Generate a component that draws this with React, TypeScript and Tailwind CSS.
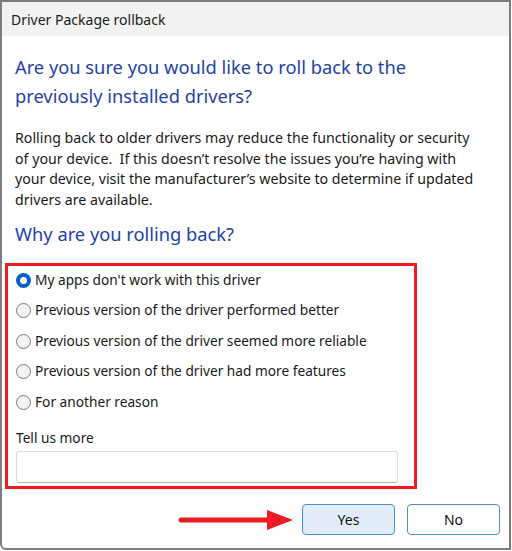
import React from 'react';

const reasons = [
  "My apps don't work with this driver",
  'Previous version of the driver performed better',
  'Previous version of the driver seemed more reliable',
  'Previous version of the driver had more features',
  'For another reason',
];

function Radio({ checked }: { checked?: boolean }) {
  if (checked) {
    return (
      <span className="w-[15px] h-[15px] rounded-full bg-[#0a5fc4] flex items-center justify-center shrink-0">
        <span className="w-[7px] h-[7px] rounded-full bg-white" />
      </span>
    );
  }
  return <span className="w-[15px] h-[15px] rounded-full border border-[#7a7a7a] bg-[#f3f3f3] shrink-0" />;
}

export default function App() {
  return (
    <div
      className="w-[512px] h-[551px] bg-white overflow-hidden"
      style={{ fontFamily: '"Noto Sans", "Open Sans", sans-serif' }}
    >
      <div className="w-[511px] h-[550px] border-2 border-[#7d7d7d] rounded-bl-[6px] flex flex-col">
        {/* Title bar */}
        <div className="h-[34px] bg-[#f2f2f2] flex items-center pl-[9px] text-[14px] text-[#1a1a1a]">
          Driver Package rollback
        </div>

        <div className="flex flex-col pl-[13px] pr-[10px]">
          {/* Main instruction */}
          <h1 className="mt-[16px] text-[18.3px] leading-[29px] text-[#1f43a6] whitespace-nowrap">
            Are you sure you would like to roll back to the
            <br />
            previously installed drivers?
          </h1>

          <p className="mt-[18px] text-[14.2px] leading-[20.5px] text-[#1a1a1a] whitespace-nowrap">
            Rolling back to older drivers may reduce the functionality or security
            <br />
            of your device.{'\u00a0'} If this doesn’t resolve the issues you’re having with
            <br />
            your device, visit the manufacturer’s website to determine if updated
            <br />
            drivers are available.
          </p>

          <h2 className="mt-[9px] text-[18.3px] leading-[29px] text-[#1f43a6]">Why are you rolling back?</h2>
        </div>

        {/* Highlighted reasons */}
        <div className="ml-[3px] mt-[15px] w-[412px] h-[226px] shrink-0 border-[3px] border-[#ec1c24] flex flex-col pl-[8px]">
          <div className="flex flex-col -mt-[1px]">
            {reasons.map((r, i) => (
              <label key={r} className="h-[30.5px] flex items-center gap-[4px] text-[13.7px] text-[#1a1a1a]">
                <Radio checked={i === 0} />
                {r}
              </label>
            ))}
          </div>
          <div className="mt-[10px] h-[20px] leading-[20px] text-[13.7px] text-[#1a1a1a]">Tell us more</div>
          <div className="mt-[3px] w-[382px] h-[32px] shrink-0 border border-[#dcdcdc] border-b-[#b5b5b5] rounded-[3px] bg-white" />
        </div>

        {/* Buttons */}
        <div className="mt-[15px] flex items-center">
          <svg width="120" height="22" viewBox="0 0 120 22" className="ml-[175px]">
            <line x1="4" y1="11" x2="95" y2="11" stroke="#ec1c24" strokeWidth="5" strokeLinecap="round" />
            <polygon points="90,1 116,11 90,21" fill="#ec1c24" />
          </svg>
          <button className="ml-[5px] w-[93px] h-[31px] rounded-[4px] border border-[#4a8fd6] bg-[#e0edf9] text-[14px] text-[#111]">
            Yes
          </button>
          <button className="ml-[12px] w-[93px] h-[31px] rounded-[4px] border border-[#4a8fd6] bg-white text-[14px] text-[#111]">
            No
          </button>
        </div>
      </div>
    </div>
  );
}
